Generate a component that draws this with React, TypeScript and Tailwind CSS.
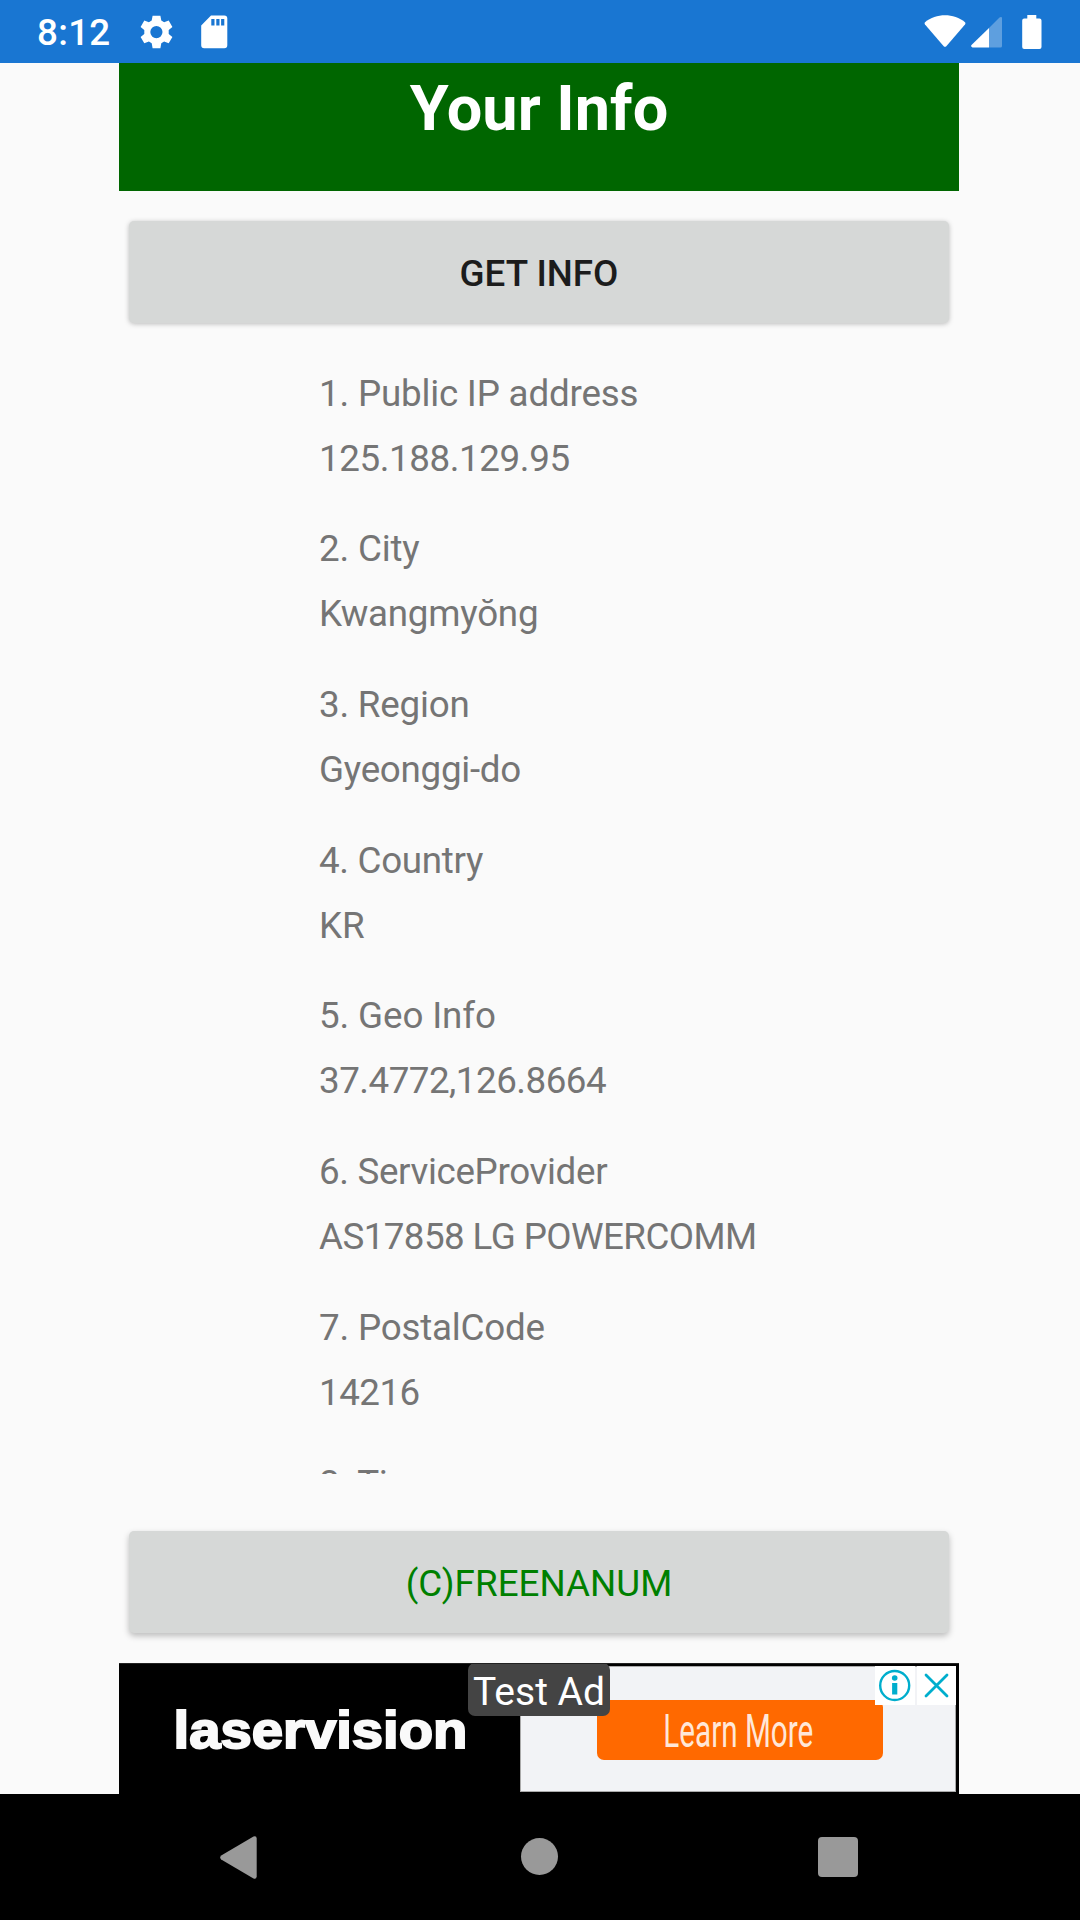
const entries = [
  { title: "1. Public IP address", titleTracking: "tracking-[-0.19px]", value: "125.188.129.95", valueTracking: "tracking-[-0.4px]" },
  { title: "2. City", titleTracking: "tracking-[-0.17px]", value: "Kwangmyŏng", valueTracking: "tracking-[-0.24px]" },
  { title: "3. Region", titleTracking: "tracking-[-0.2px]", value: "Gyeonggi-do", valueTracking: "tracking-[-0.27px]" },
  { title: "4. Country", titleTracking: "tracking-[-0.3px]", value: "KR", valueTracking: "tracking-normal" },
  { title: "5. Geo Info", titleTracking: "tracking-[-0.12px]", value: "37.4772,126.8664", valueTracking: "tracking-[-0.5px]" },
  { title: "6. ServiceProvider", titleTracking: "tracking-[-0.34px]", value: "AS17858 LG POWERCOMM", valueTracking: "tracking-[-0.57px]" },
  { title: "7. PostalCode", titleTracking: "tracking-[-0.19px]", value: "14216", valueTracking: "tracking-[-0.5px]" },
  { title: "8. Timezone", titleTracking: "tracking-[-0.2px]", value: "", valueTracking: "tracking-normal" },
];

function StatusBar() {
  return (
    <header className="flex h-[63px] shrink-0 items-center bg-[#1976d2] text-white">
      <span className="ml-[37px] w-[103px] pt-[3px] text-[36.75px] leading-[60px] font-medium tracking-[0.3px]">8:12</span>
      <svg className="h-[34px] w-[33px]" viewBox="0 0 33 34">
        <path
          fill="white"
          fillRule="evenodd"
          d="M12.6 0.8h7.8l.9 4.7 2.8 1.7 4.6-1.8 3.7 6.5-3.7 3.1v3.9l3.7 3-3.7 6.4-4.6-1.7-2.8 1.6-.9 5h-7.8l-.9-5-2.8-1.6-4.6 1.7-3.7-6.4 3.7-3V15L.6 11.900l3.7-6.5 4.600 1.800 2.800-1.700zM16.400 11a6.100 6.100 0 1 0 0 12.200 6.100 6.100 0 0 0 0-12.200z"
        />
      </svg>
      <svg className="ml-[28px] h-[34px] w-[27px]" viewBox="0 0 27 34">
        <path
          fill="white"
          fillRule="evenodd"
          d="M10 .500h13.300q3 0 3 3v26.800q0 3-3 3H3.200q-3 0-3-3V10.500zM10.300 4v6.500h3.200V4zm5 0v6.500h3.200V4zm4.800 0v6.500h3.200V4z"
        />
      </svg>
      <svg className="ml-auto h-[34px] w-[42px]" viewBox="0 0 42 34">
        <path fill="white" d="M1 7.300C12-2 30-2 41 7.300q.900.900 0 2.100L22.300 31.200q-1.300 1.200-2.600 0L1 9.400Q.100 8.200 1 7.300z" />
      </svg>
      <svg className="ml-[5px] h-[34px] w-[32px]" viewBox="0 0 32 34">
        <path fill="white" fillOpacity=".3" d="M18 13 28.500 2.600Q30 1.500 31 2.600V31q0 1.500-1.500 1.500H18z" />
        <path fill="white" d="M18 13v19.500H1.500Q-.700 31.500.500 30z" />
      </svg>
      <svg className="mr-[38px] ml-[19px] h-[34px] w-[20px]" viewBox="0 0 20 34">
        <path fill="white" d="M5.300 0h9v3.500h3.200q2 0 2 2V32q0 2-2 2H2.200q-2 0-2-2V5.500q0-2 2-2h3.100z" />
      </svg>
    </header>
  );
}

function AdBanner() {
  return (
    <section className="relative flex h-[131px] w-[840px] shrink-0 overflow-hidden border-t border-[#222] bg-black">
      <svg className="h-[130px] w-[401px] shrink-0" viewBox="0 0 401 130">
        <text
          x="54.500"
          y="84"
          fill="#fafafa"
          stroke="#fafafa"
          strokeWidth="2"
          fontFamily="Liberation Sans, sans-serif"
          fontWeight="700"
          fontSize="52"
          textLength="294"
          lengthAdjust="spacingAndGlyphs"
        >
          laservision
        </text>
      </svg>
      <div className="mt-[2px] flex h-[126px] w-[436px] shrink-0 border border-[#aaa] bg-[#f2f3f6]">
        <div className="mt-[33px] ml-[76px] flex h-[60px] w-[286px] items-center justify-center rounded-[7px] bg-[#ff6900]">
          <span className="mr-[3px] pt-[2px] scale-x-[0.645] text-[46px] leading-[60px] whitespace-nowrap text-[#ffe7d8]">Learn More</span>
        </div>
      </div>
      <span className="absolute -top-px left-[349px] h-[53px] w-[142px] rounded-[7px] bg-[#444] text-center text-[39px] leading-[58px] whitespace-nowrap text-white">
        Test Ad
      </span>
      <div className="absolute top-[2px] right-[3px] flex gap-[2px]">
        <svg className="h-[39px] w-[40px] bg-white" viewBox="0 0 40 39">
          <circle cx="19.700" cy="19.500" r="14.500" fill="none" stroke="#00aecd" strokeWidth="2.400" />
          <circle cx="19.700" cy="12" r="2.800" fill="#00aecd" />
          <path fill="#00aecd" d="M17.100 17h5.200v11.500h-5.200z" />
        </svg>
        <svg className="h-[39px] w-[39px] bg-white" viewBox="0 0 39 39">
          <path d="M9 9l21 21M30 9 9 30" stroke="#00aecd" strokeWidth="2.800" strokeLinecap="round" />
        </svg>
      </div>
    </section>
  );
}

function NavigationBar() {
  return (
    <nav className="flex h-[126px] shrink-0 items-center bg-black">
      <svg className="ml-[220px] h-[43px] w-[37px]" viewBox="0 0 37 43">
        <path fill="#999" d="M33.500.600Q36.500-.500 36.700 2.500v38q-.400 3-3.200 1.900L1.200 23.500q-2-2 0-4z" />
      </svg>
      <div className="mb-[1px] ml-[264px] h-[37px] w-[37px] rounded-full bg-[#999]" />
      <div className="ml-[260px] h-[40px] w-[40px] rounded-[4px] bg-[#999]" />
    </nav>
  );
}

export default function App() {
  return (
    <div className="flex h-[1920px] w-[1080px] flex-col overflow-hidden bg-[#fafafa] font-['Roboto',sans-serif]">
      <StatusBar />
      <main className="ml-[119px] flex h-[1731px] w-[840px] flex-col">
        <h1 className="h-[128px] shrink-0 bg-[#006600] pt-[6px] text-center text-[63px] leading-[80px] font-bold text-white">
          Your Info
        </h1>
        <button className="mx-[10px] mt-[30px] h-[102px] shrink-0 rounded-[5px] bg-[#d6d8d7] pt-[4px] text-[36.75px] font-medium text-[#1c1c1c] shadow-[0_1px_5px_rgba(0,0,0,0.25)]">
          GET INFO
        </button>
        <div className="mt-[37.8px] ml-[200px] flex h-[1113.2px] shrink-0 flex-col gap-[25.97px] overflow-hidden text-[36.75px] leading-[65px] whitespace-nowrap text-[#757575]">
          {entries.map((entry) => (
            <div key={entry.title} className="shrink-0">
              <p className={entry.titleTracking}>{entry.title}</p>
              {entry.value && (
                <div className="-mt-[0.3px]">
                  <p className={entry.valueTracking}>{entry.value}</p>
                </div>
              )}
            </div>
          ))}
        </div>
        <button className="mx-[10px] mt-[57px] h-[102px] shrink-0 rounded-[5px] bg-[#d6d8d7] pt-[4px] text-[36.75px] tracking-[0.04px] text-[#008000] shadow-[0_3px_6px_rgba(0,0,0,0.25)]">
          (C)FREENANUM
        </button>
        <div className="mt-[30px]">
          <AdBanner />
        </div>
      </main>
      <NavigationBar />
    </div>
  );
}
